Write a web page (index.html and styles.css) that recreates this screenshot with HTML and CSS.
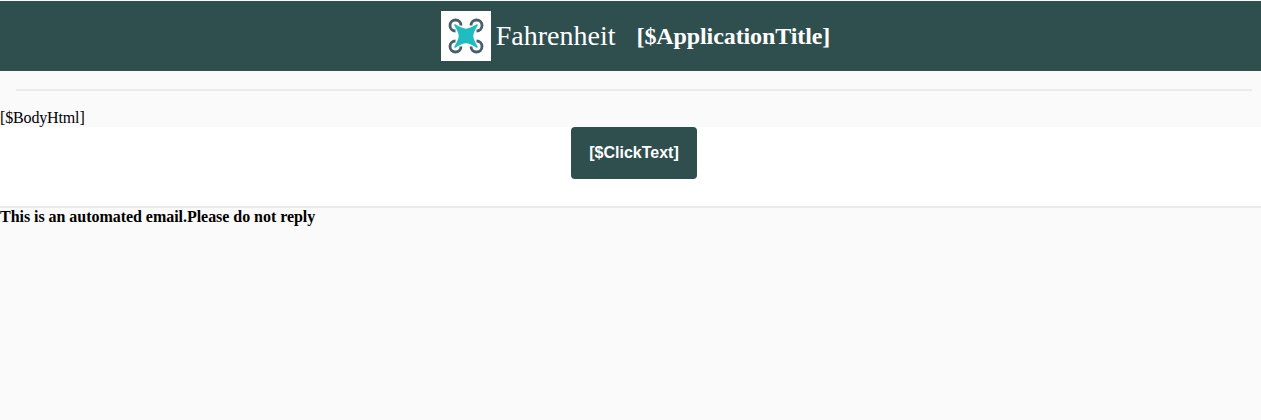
FILE: index.html
```html
<!DOCTYPE html>
<html lang="en">
<head>
    <meta charset="UTF-8">
    <title>Fahrenheit</title>
    <link rel="stylesheet" href="styles.css">
</head>
<body>
    <header class="top-bar">
        <svg class="logo" viewBox="0 0 50 50" width="50" height="50" aria-label="Fahrenheit logo">
            <rect width="50" height="50" fill="#fff"/>
            <g fill="none" stroke="#4a5d6d" stroke-width="2.8">
                <path d="M14.5 20 A5.5 5.5 0 1 1 20 14.5"/>
                <path d="M30 14.5 A5.5 5.5 0 1 1 35.5 20"/>
                <path d="M14.5 30 A5.5 5.5 0 1 0 20 35.5"/>
                <path d="M30 35.5 A5.5 5.5 0 1 0 35.5 30"/>
            </g>
            <path d="M14 14 C18 16.5 22 18.5 25 18.5 C28 18.5 32 16.5 36 14 C33.5 18 31.5 22 31.5 25 C31.5 28 33.5 32 36 36 C32 33.5 28 31.5 25 31.5 C22 31.5 18 33.5 14 36 C16.5 32 18.5 28 18.5 25 C18.5 22 16.5 18 14 14 Z" fill="#1fbcc0" stroke="#1fbcc0" stroke-width="1.6" stroke-linejoin="round"/>
        </svg>
        <span class="brand">Fahrenheit</span>
        <strong class="app-title">[$ApplicationTitle]</strong>
    </header>

    <hr class="rule rule-top">

    <div class="body-html">[$BodyHtml]</div>

    <div class="action">
        <a class="click-btn" href="#">[$ClickText]</a>
    </div>

    <hr class="rule rule-bottom">

    <p class="note">This is an automated email.Please do not reply</p>
</body>
</html>
```

FILE: styles.css
```css
* {
    box-sizing: border-box;
    margin: 0;
    padding: 0;
}

html {
    background: #fafafa;
}

body {
    min-height: 100vh;
    padding-top: 1px;
    background: #fafafa;
    color: #000;
    font-family: "Liberation Serif", "Times New Roman", serif;
    font-size: 16px;
}

.top-bar {
    display: flex;
    justify-content: center;
    align-items: center;
    height: 70px;
    padding-left: 10px;
    background: #2f4f4f;
    color: #fff;
}

.logo {
    display: block;
    margin-right: 5px;
}

.brand {
    font-size: 28px;
    margin-right: 21px;
}

.app-title {
    font-size: 24px;
    letter-spacing: -0.1px;
}

.rule {
    border: none;
    height: 2px;
    background: #ebebeb;
}

.rule-top {
    margin: 18px 9px 0 16px;
}

.body-html {
    margin-top: 18px;
    line-height: 18px;
    letter-spacing: -0.15px;
}

.action {
    display: flex;
    justify-content: center;
    height: 79px;
    padding-left: 7px;
    background: #fff;
}

.click-btn {
    display: block;
    align-self: flex-start;
    width: 126px;
    line-height: 52px;
    background: #2f4f4f;
    border-radius: 4px;
    color: #fff;
    font-family: "Liberation Sans", Arial, sans-serif;
    font-size: 16px;
    font-weight: bold;
    text-align: center;
    text-decoration: none;
}

.note {
    font-weight: bold;
    line-height: 18px;
    letter-spacing: -0.04px;
}
```
